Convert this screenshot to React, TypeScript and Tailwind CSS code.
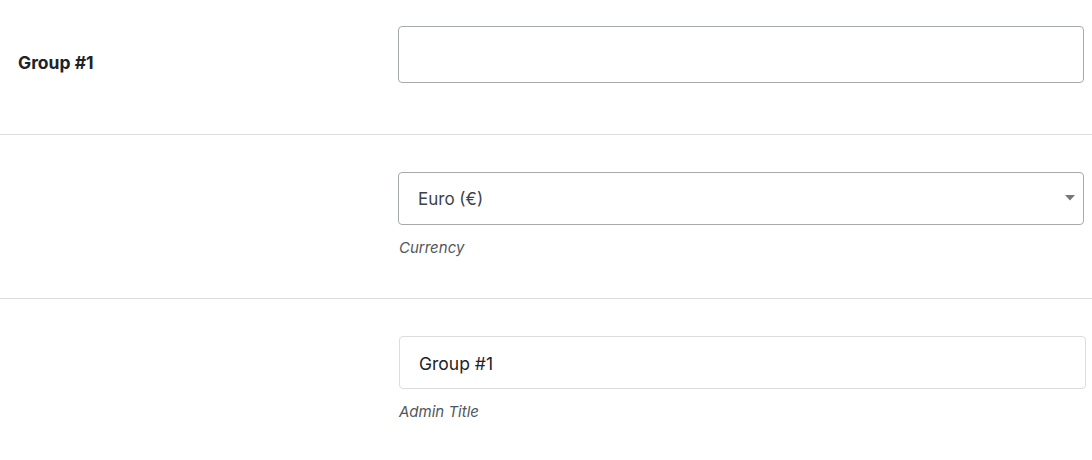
const font = { fontFamily: "Inter, 'Noto Sans', sans-serif" };

export default function App() {
  return (
    <div className="w-[1092px] h-[460px] overflow-hidden bg-white text-[#1d2327]" style={font}>
      {/* row 1 */}
      <div className="flex border-b border-[#dcdcde] h-[135px]">
        <div className="w-[398px] shrink-0 pl-[18px] pt-[51px]">
          <span className="text-[17.5px] font-bold leading-[22px]">Group #1</span>
        </div>
        <div className="pt-[26px]">
          <input
            type="text"
            className="w-[686px] h-[57px] rounded-[4px] border border-[#a7aaad] bg-white px-5 text-[17px] outline-none"
          />
        </div>
      </div>

      {/* row 2 */}
      <div className="flex border-b border-[#dcdcde] h-[164px]">
        <div className="w-[398px] shrink-0" />
        <div className="pt-[37px]">
          <div className="relative w-[686px] h-[53px] rounded-[4px] border border-[#a7aaad] bg-white flex items-center pl-[19px] pt-[3px] text-[17px] text-[#3c434a]">
            Euro (€)
            <svg className="absolute right-[8px] top-[22px]" width="10" height="6" viewBox="0 0 10 6">
              <path d="M0 0h10L5 5.5z" fill="#777" />
            </svg>
          </div>
          <p className="mt-[13px] pl-px text-[15px] italic text-[#50575e] leading-5">Currency</p>
        </div>
      </div>

      {/* row 3 */}
      <div className="flex">
        <div className="w-[399px] shrink-0" />
        <div className="pt-[37px]">
          <div className="w-[687px] h-[53px] rounded-[4px] border border-[#dcdcde] bg-white flex items-center pl-[19px] pt-[3px] text-[17.5px] text-[#1d2327]">
            Group #1
          </div>
          <p className="mt-[13px] text-[15px] italic text-[#50575e] leading-5">Admin Title</p>
        </div>
      </div>
    </div>
  );
}
